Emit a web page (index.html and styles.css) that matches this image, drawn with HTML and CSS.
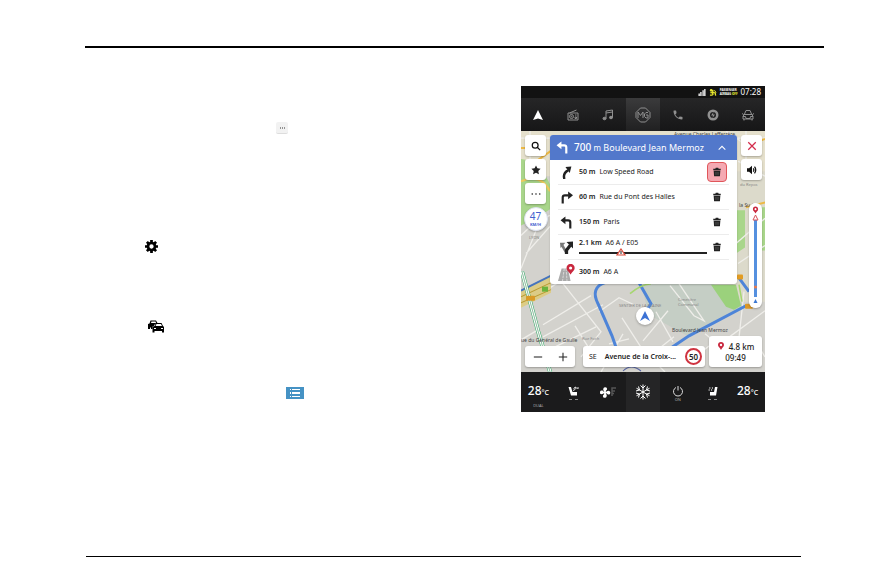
FILE: index.html
```html
<!DOCTYPE html>
<html lang="en">
<head>
<meta charset="utf-8">
<meta name="viewport" content="width=device-width, initial-scale=1">
<title>Navigation route list</title>
<link rel="stylesheet" href="styles.css">
</head>
<body>
<svg class="defs" aria-hidden="true">
  <symbol id="trash" viewBox="0 0 24 24"><path fill="currentColor" d="M9 2h6l1 2h5v4H3V4h5zM4 9h16l-1 13H5z"/><path d="M9 12v7M12 12v7M15 12v7" stroke="#fff" stroke-opacity=".35" stroke-width="1"/></symbol>
  <symbol id="pin" viewBox="0 0 24 24"><path fill="#c9283e" d="M12 0C6.500 0 3 4 3 9c0 6 6 8 9 15 3-7 9-9 9-15 0-5-3.500-9-9-9z"/><circle cx="12" cy="9" r="3.500" fill="#fff"/></symbol>
  <symbol id="left" viewBox="0 0 24 24"><path d="M8 8h7q4 0 4 4v11" fill="none" stroke="currentColor" stroke-width="4"/><path fill="currentColor" d="M10 1v14L1 8z"/></symbol>
  <symbol id="right" viewBox="0 0 24 24"><path d="M5 23V12q0-4 4-4h7" fill="none" stroke="currentColor" stroke-width="4"/><path fill="currentColor" d="M15 1v14l9-7z"/></symbol>
</svg>
<header class="page-head"></header>
<main class="page">
  <section class="notes">
    <span class="note-icon chip"><svg viewBox="0 0 12 12"><path d="M4 6h1M6 6h1M8 6h1" stroke="#333" stroke-width="1"/></svg></span>
    <svg class="note-icon gear" viewBox="0 0 24 24"><circle cx="12" cy="12" r="6.500" fill="none" stroke="#000" stroke-width="5"/><path d="M12 0v4M12 20v4M0 12h4M20 12h4M3.500 3.500l3 3M17.500 17.500l3 3M3.500 20.500l3-3M17.500 6.500l3-3" stroke="#000" stroke-width="5"/></svg>
    <svg class="note-icon cars" viewBox="0 0 32 26"><path d="M0 18V8l3-1 2-6h11l3 5-5 2-3 5H9v5H6v-3H4v3z"/><path d="M6 6l1-3h8l1 3z" fill="#fff"/><path d="M9 25V14l4-2 3-6h11l3 6 2 2v11h-4v-3H13v3z"/><path d="M15 12l2-4h9l2 4z" fill="#fff"/><path d="M12 16h4v2h-4zM26 16h4v2h-4z" fill="#fff"/></svg>
    <svg class="note-icon list" viewBox="0 0 18 12"><path fill="#4592c4" d="M0 0h18v12H0z"/><path d="M4 2.500h1M6 2.500h8M4 9.500h1M6 9.500h8" stroke="#fff" stroke-width="1"/><path d="M4 6h1M6 6h8" stroke="#fff" stroke-width="2"/></svg>
  </section>

  <section class="device" aria-label="Navigation screen">
    <div class="status">
      <svg class="ic8" viewBox="0 0 16 16"><path fill="#fff" d="M0 10h3v6H0zM4 7h3v9H4zM9 3h3v13H9zM13 0h3v16h-3z"/></svg>
      <svg class="ic8" viewBox="0 0 16 16"><path d="M2 2l5 2 1 4 5 1 1 6M2 8l5 1 1 5M1 14h6" stroke="#e6e62e" stroke-width="3" fill="none"/><circle cx="4" cy="3" r="3" fill="#e6e62e"/><path d="M9 3q5 0 6 6" stroke="#e6e62e" stroke-width="2" fill="none"/></svg>
      <span class="airbag">PASSENGER<br>AIRBAG <b>OFF</b></span>
      <time class="clock">07:28</time>
    </div>
    <nav class="tabs">
      <button aria-label="Navigation" class="tab on"><svg viewBox="0 0 24 24"><path fill="#fff" d="M12 2l10 20-10-3-10 3z"/></svg></button>
      <button aria-label="Radio" class="tab"><svg viewBox="0 0 24 24" fill="none" stroke="currentColor" stroke-width="2"><path d="M2 8h20v14H2zM5 8l14-6M16 12h3M16 16h3v3h-3z"/><circle cx="9" cy="15" r="4"/><circle cx="9" cy="15" r="1"/></svg></button>
      <button aria-label="Music" class="tab"><svg viewBox="0 0 24 24" fill="none" stroke="currentColor" stroke-width="2"><path d="M8 19V4l13-2v15M8 8l13-2"/><ellipse cx="5" cy="19" rx="3" ry="2.500" fill="currentColor"/><ellipse cx="18" cy="17" rx="3" ry="2.500" fill="currentColor"/></svg></button>
      <button aria-label="Home" class="tab home"><svg viewBox="0 0 32 32" fill="none" stroke="currentColor" stroke-width="2"><path d="M11 2h10l9 9v10l-9 9H11l-9-9V11z"/><path d="M6 22V10l5 7 5-7v12M26 11h-4l-3 3v5l3 3h4v-6h-4"/></svg></button>
      <button aria-label="Phone" class="tab"><svg viewBox="0 0 24 24"><path fill="currentColor" d="M6.600 10.800c1.400 2.800 3.800 5.100 6.600 6.600l2.200-2.200c.3-.3.700-.4 1-.2 1.100.4 2.300.6 3.600.6.600 0 1 .4 1 1V20c0 .6-.4 1-1 1C10.600 21 3 13.400 3 4c0-.6.400-1 1-1h3.500c.6 0 1 .4 1 1 0 1.300.2 2.500.6 3.600.1.300 0 .7-.2 1z"/></svg></button>
      <button aria-label="Energy" class="tab"><svg viewBox="0 0 24 24"><circle cx="12" cy="12" r="8.500" fill="none" stroke="currentColor" stroke-width="5"/><path fill="currentColor" d="M13 6l-5 7h4l-1 5 5-7h-4z"/></svg></button>
      <button aria-label="Vehicle" class="tab"><svg viewBox="0 0 24 24" fill="none" stroke="currentColor" stroke-width="2"><path d="M5 10l3-7h8l3 7M0 9l3 2h18l3-2M2 20v-6l3-3h14l3 3v6zM4 20v3M20 20v3M2 15h5l1 4h8l1-4h5"/></svg></button>
    </nav>

    <div class="map">
      <svg class="map-art" viewBox="0 0 244 240" preserveAspectRatio="none" aria-hidden="true">
        <path fill="#d3d2cd" d="M0 0h244v240H0z"/>
        <path fill="#e5e0cc" d="M0 0h244v45H0z"/>
        <path fill="#dcdacb" d="M212 40h32v130h-32z"/>
        <path fill="#a9d68b" d="M0 28q18 2 29 25v25L17 86 0 94zM212 79h12v37l-12 8zM238 76h6v43h-6z"/>
        <path fill="#c5cec5" d="M120 152h72l32 22-56 31-40-22z"/>
        <path fill="#9bd17c" d="M190 153h25l5 21-7 4-8-3z"/>
        <g fill="none" stroke="#efeeea" stroke-width="1.300">
          <path d="M0 104l15-14 14-6M5 122l24-27M0 137l15-38M0 175l40-26M22 193l48-29M22 205l60-32M30 217l45-22M54 194l15 24M42 152l38 48-20 25M80 240l22-38M88 212l20-5M78 180l20-14 15 7M101 186l20 31 23 23M135 180l17 30M122 209l25-30M126 226l27-21M158 152l25 37-10-5-24-30M223 160l-6 55M203 209l41-30M184 202l20 16M168 230l20-16M233 207l11 18M12 215l30 14M0 208l17-10"/>
          <path d="M0 7h244M9 0v30M225 0v44M217 30l27 15M215 112l29-25M217 132l27-18M205 0l20 14"/>
        </g>
        <path d="M0 50q20-8 29 10" fill="none" stroke="#f0cb5c" stroke-width="2"/>
        <path d="M-2 17h14M225 76l20-5M224 14l20-6M14 31l17-12" stroke="#edb944" stroke-width="2"/>
        <path d="M0 159l30-15v17L0 176z" fill="#dccc86"/>
        <path d="M0 165l30-14M0 171l30-13" stroke="#b99a31"/>
        <path d="M0 159l30-15" stroke="#4674bd" stroke-width="2"/>
        <path d="M1 140l16 59 13 44" fill="none" stroke="#35a967" stroke-width="4"/>
        <path d="M1 140l16 59 13 44" fill="none" stroke="#fff" stroke-width="3"/>
        <path d="M1 140l16 59 13 44" fill="none" stroke="#8ebb9e" stroke-width="1"/>
        <path d="M84 151q-15 5-7 21l14 32 6 17M118 151l12 21-8 12M144 220l24-16 57-30M217 145l11 15" fill="none" stroke="#4d84d8" stroke-width="3"/>
        <path d="M102 239q8-8 18 0" fill="none" stroke="#5865a5"/>
        <path d="M109 162q10-9 21-10M218 153l3 17" fill="none" stroke="#a6d66f" stroke-width="1.500"/>
        <rect x="5" y="164" width="9" height="5" rx="1" fill="#d99b27"/><rect x="21" y="155" width="6" height="5" fill="#6ab33c"/>
        <rect x="216" y="143" width="6" height="5" rx="1" fill="#e29c22"/><rect x="224" y="172" width="8" height="5" rx="1" fill="#db9727"/>
        <g class="map-label">
          <text x="153" y="5">Avenue Charles Lafferrère</text>
          <text x="151" y="200">Boulevard Jean Mermoz</text>
          <text x="0" y="210">ue du Général de Gaulle</text>
          <text x="61" y="208" class="faint">Rue Foch</text>
          <text x="218" y="76">la Sud</text>
          <text x="219" y="55" class="faint">du Repos</text>
          <text x="98" y="175" class="faint">SENTIER DE LA PLAINE</text>
          <text x="157" y="169" class="faint">Cimetière</text>
          <text x="157" y="174" class="faint">Communal</text>
          <text x="8" y="108" class="faint">LYON</text>
        </g>
      </svg>
      <svg class="vehicle" viewBox="0 0 18 18"><circle cx="9" cy="9" r="9" fill="#fff"/><path fill="#3c72d5" d="M9 4l5 10-5-3-5 3z"/></svg>

      <div class="overlay-top">
        <div class="rail">
          <button class="tile" aria-label="Search"><svg viewBox="0 0 24 24" fill="none" stroke="#111" stroke-width="3"><circle cx="10" cy="10" r="7"/><path d="M15 15l7 7"/></svg></button>
          <button class="tile" aria-label="Favourites"><svg viewBox="0 0 24 24"><path fill="#222" d="M12 1l3.400 7 7.600 1-5.500 5.300L19 22l-7-3.600L5 22l1.500-7.700L1 9l7.600-1z"/></svg></button>
          <button class="tile" aria-label="More"><svg viewBox="0 0 24 24" fill="#222"><circle cx="3" cy="12" r="2"/><circle cx="12" cy="12" r="2"/><circle cx="21" cy="12" r="2"/></svg></button>
          <div class="speed"><span>47</span><small>KM/H</small></div>
        </div>

        <section class="route">
          <header class="route-head">
            <svg class="turn" viewBox="0 0 24 24"><use href="#left"/></svg>
            <h1><span class="num">700</span> <small>m</small> Boulevard Jean Mermoz</h1>
            <button class="bare" aria-label="Collapse"><svg viewBox="0 0 24 24"><path d="M4 16l8-8 8 8" fill="none" stroke="#fff" stroke-width="2.500"/></svg></button>
          </header>
          <ol class="steps">
            <li><svg class="turn" viewBox="0 0 24 24"><path d="M8 24q-3-11 7-16" fill="none" stroke="currentColor" stroke-width="4.500"/><path fill="currentColor" d="M10 2l11-1-3 12z"/></svg><p><b>50 m</b> Low Speed Road</p><button class="del active" aria-label="Avoid Low Speed Road"><svg><use href="#trash"/></svg></button></li>
            <li><svg class="turn"><use href="#right"/></svg><p><b>60 m</b> Rue du Pont des Halles</p><button class="del" aria-label="Avoid Rue du Pont des Halles"><svg><use href="#trash"/></svg></button></li>
            <li><svg class="turn"><use href="#left"/></svg><p><b>150 m</b> Paris</p><button class="del" aria-label="Avoid Paris"><svg><use href="#trash"/></svg></button></li>
            <li><svg class="turn" viewBox="0 0 24 24"><path d="M11 20L4 8" fill="none" stroke="#777" stroke-width="5"/><path fill="#777" d="M0 3h10L1 13z"/><path d="M12 24v-7l7-9" fill="none" stroke="currentColor" stroke-width="6"/><path fill="currentColor" d="M12 2l12-1v13z"/></svg><div class="traffic"><p><b>2.1 km</b> A6 A / E05</p><svg class="traffic-line" viewBox="0 0 128 8" preserveAspectRatio="none"><path d="M0 5h128" stroke="#222" stroke-width="2"/><path d="M42 1l4 6h-8z" fill="#fff" stroke="#d84a3a" stroke-width="1.200"/><path d="M42 3v3" stroke="#222"/></svg></div><button class="del" aria-label="Avoid A6 A / E05"><svg><use href="#trash"/></svg></button></li>
            <li><svg class="arrive" viewBox="0 0 20 20"><path fill="#aaa" d="M4 6h7l3 14H0z"/><path d="M7 6L5 20M9 6l1 14" stroke="#fff" stroke-width=".6" stroke-dasharray="3 1"/><svg x="8" y="0" width="12" height="14" viewBox="0 0 24 24"><use href="#pin"/></svg></svg><p><b>300 m</b> A6 A</p></li>
          </ol>
        </section>

        <div class="rail rail-end">
          <button class="tile" aria-label="Close"><svg viewBox="0 0 24 24"><path d="M3 3l18 18M21 3L3 21" stroke="#d42b4b" stroke-width="3"/></svg></button>
          <button class="tile" aria-label="Sound"><svg viewBox="0 0 24 24"><path fill="#111" d="M0 8h5l7-6v20l-7-6H0z"/><path d="M15 8q3 4 0 8M18 4q6 8 0 16" fill="none" stroke="#111" stroke-width="3"/></svg></button>
          <div class="progress"><svg viewBox="0 0 13 105" preserveAspectRatio="none"><path d="M6.500 14v80" stroke="#5590df" stroke-width="3"/><svg x="3" y="3" width="7" height="8"><use href="#pin"/></svg><path d="M6.500 12l2.500 5H4z" fill="#fff" stroke="#d75259"/><circle cx="6.500" cy="84" r="1.500" fill="#ed7a48"/><path d="M6.500 96l2 4h-4z" fill="#3b77d2"/></svg></div>
        </div>
      </div>

      <div class="overlay-bottom">
        <div class="card zoom"><button class="bare" aria-label="Zoom out"><svg viewBox="0 0 24 24"><path d="M2 12h20" stroke="#222" stroke-width="2.500"/></svg></button><button class="bare" aria-label="Zoom in"><svg viewBox="0 0 24 24"><path d="M2 12h20M12 2v20" stroke="#222" stroke-width="2.500"/></svg></button></div>
        <div class="card street"><span>SE</span><strong>Avenue de la Croix-...</strong><span class="limit">50</span></div>
        <div class="card eta"><span><svg><use href="#pin"/></svg>4.8 km</span><span>09:49</span></div>
      </div>
    </div>

    <footer class="climate">
      <div class="cell"><span class="temp">28<small>°C</small></span><span class="sub">DUAL</span></div>
      <div class="cell"><svg viewBox="0 0 24 24"><path d="M3 2h5l3 10h9v7H8z" fill="#fff"/><path d="M12 9q5 0 5-7M17 2l-4 3M17 2l4 4M20 4h4" fill="none" stroke="#ddd" stroke-width="2"/></svg><span class="dash"></span></div>
      <div class="cell fan"><svg class="wide" viewBox="0 0 34 24"><g fill="#fff"><circle cx="10" cy="13" r="3"/><path d="M10 12q-6-4-2-9 7-2 6 4zM11 13q5-6 9-2 2 7-4 6zM10 14q6 4 2 9-7 2-6-4zM9 13q-5 6-9 2-1-7 5-6z"/></g><path d="M24 20V4h8M25 10h5M25 15h3" stroke="#555" stroke-width="3" fill="none"/></svg></div>
      <div class="cell mid"><svg class="snow" viewBox="0 0 32 32" fill="none" stroke="#fff" stroke-width="2"><path d="M16 1v30M3 8.500l26 15M3 23.500l26-15M11 3l5 5 5-5M11 29l5-5 5 5M2 14l7-2-2-7M30 18l-7 2 2 7M2 18l7 2-2 7M30 14l-7-2 2-7"/></svg></div>
      <div class="cell"><svg viewBox="0 0 24 24"><path d="M8 3a9 9 0 1 0 8 0M12 0v9" fill="none" stroke="#ddd" stroke-width="2"/></svg><span class="sub">ON</span></div>
      <div class="cell"><svg viewBox="0 0 24 24"><path d="M21 2h-5l-2 10H6v7h12z" fill="#fff"/><path d="M5 2q3 2 0 4t0 4M10 2q3 2 0 4t0 4" fill="none" stroke="#aaa" stroke-width="2"/></svg><span class="dash"></span></div>
      <div class="cell"><span class="temp">28<small>°C</small></span></div>
    </footer>
  </section>
</main>
<footer class="page-foot"></footer>
</body>
</html>
```
FILE: styles.css
```css
* { box-sizing: border-box; }
body {
  margin: 0;
  min-height: 100vh;
  padding: 46px 72px 10px 85px;
  display: flex;
  flex-direction: column;
  background: #fff;
  font: 7px/10px "Noto Sans", "Liberation Sans", sans-serif;
  color: #222;
}
h1, p, ol { margin: 0; padding: 0; font-weight: 400; }
button { margin: 0; padding: 0; border: 0; background: none; color: inherit; font: inherit; display: flex; align-items: center; justify-content: center; }
svg { display: block; flex: none; }
.defs { position: absolute; width: 0; height: 0; }
.page-head { border-top: 2px solid #000; }
.page-foot { margin: auto 23px 0 1px; border-top: 1px solid #000; }
.page {
  display: grid;
  grid-template-columns: 436fr 244fr 59fr;
  align-items: start;
  padding-top: 38px;
}

.notes { display: flex; flex-direction: column; align-items: flex-start; padding: 36px 0 0 60px; }
.chip { width: 12px; height: 12px; margin-left: 131px; background: #f2f2f2; border-bottom: 1px solid #ddd; border-radius: 2px; }
.gear { width: 13px; height: 13px; margin-top: 106px; }
.cars { width: 16px; height: 13px; margin: 67px 0 0 3px; }
.list { width: 18px; height: 12px; margin: 54px 0 0 141px; }

.device { grid-column: 2; min-width: 0; background: #1b1b1c; }
.status { display: flex; align-items: center; justify-content: flex-end; gap: 3px; height: 12px; padding-right: 4px; background: #121212; color: #fff; }
.ic8 { width: 8px; height: 7px; }
.airbag { font-size: 3px; line-height: 4px; font-weight: 700; }
.airbag b { color: #e6e62e; }
.clock { font-size: 8px; }

.tabs { display: grid; grid-template-columns: repeat(7, 1fr); height: 33px; background: linear-gradient(#262627, #161617); color: #909090; }
.tab svg { width: 12px; height: 12px; }
.tab.home { background: linear-gradient(#3b3b3c, #202021); }
.tab.home svg { width: 16px; height: 16px; }

.map { position: relative; height: 241px; padding: 4px 3px 5px 4px; display: flex; flex-direction: column; justify-content: space-between; overflow: hidden; }
.map-art { position: absolute; inset: 0; width: 100%; height: 100%; }
.map-label { font-size: 5px; fill: #444; }
.map-label .faint { font-size: 4px; fill: #858585; }
.vehicle { position: absolute; left: 47%; top: 73%; width: 18px; height: 18px; filter: drop-shadow(0 1px 1px #0004); }

.overlay-top, .overlay-bottom { position: relative; display: flex; gap: 4px; }
.overlay-bottom { align-items: flex-end; }
.rail { width: 21px; flex: none; display: flex; flex-direction: column; align-items: center; gap: 3px; }
.rail-end { align-items: flex-end; }
.tile { width: 21px; height: 21px; border-radius: 3px; background: #fff; box-shadow: 0 1px 2px #0004; }
.tile svg { width: 10px; height: 10px; }
.speed { width: 24px; height: 24px; border-radius: 50%; background: #fff; border: 1px solid #dde2ef; box-shadow: 0 1px 2px #0004; color: #4461cf; text-align: center; display: flex; flex-direction: column; align-items: center; justify-content: center; font: 10px/12px "Noto Sans", sans-serif; }
.speed small { font-size: 4px; line-height: 6px; font-weight: 700; }
.progress { width: 13px; height: 105px; margin-top: 20px; background: #fff; border-radius: 6px; box-shadow: 0 1px 2px #0004; }
.progress > svg { width: 100%; height: 100%; }

.route { flex: 1; min-width: 0; align-self: flex-start; background: #fff; border-radius: 3px; overflow: hidden; box-shadow: 0 1px 2px #0003; }
.route-head { display: flex; align-items: center; height: 25px; padding: 0 10px 0 6px; background: #5278cb; color: #fff; }
.route-head h1 { flex: 1; padding-left: 5px; font-size: 9px; white-space: nowrap; }
.route-head .num { font-size: 10px; font-weight: 500; }
.route-head small { font-size: 8px; }
.turn { width: 13px; height: 13px; }
.bare svg { width: 10px; height: 10px; }
.steps { list-style: none; }
.steps li { display: flex; align-items: center; gap: 6px; height: 25px; margin: 0 8px; padding-left: 2px; border-bottom: 1px solid #ececec; }
.steps li:last-child { height: 24px; border: 0; padding-left: 0; gap: 3px; }
.steps p { flex: 1; white-space: nowrap; }
.steps b { font-weight: 600; margin-right: 2px; }
.arrive { width: 18px; height: 18px; }
.traffic { flex: 1; min-width: 0; }
.traffic-line { width: 128px; max-width: 100%; height: 8px; }
.del { width: 20px; height: 20px; flex: none; border: 1px solid transparent; border-radius: 4px; color: #222; margin-right: 2px; }
.traffic + .del { margin-left: -6px; }
.del svg { width: 10px; height: 10px; }
.active { background: #f5a9b2; border-color: #e0565a; }

.card { height: 21px; background: #fff; border-radius: 3px; box-shadow: 0 1px 2px #0004; display: flex; align-items: center; }
.zoom { width: 50px; justify-content: space-around; margin-right: 4px; }
.zoom svg { width: 10px; height: 10px; }
.street { flex: 1; min-width: 0; gap: 8px; padding: 0 3px 0 6px; white-space: nowrap; }
.street strong { flex: 1; font-weight: 600; }
.limit { flex: none; width: 17px; height: 17px; border: 2px solid #cf3340; border-radius: 50%; font: 600 8px/13px "Noto Sans", sans-serif; display: flex; align-items: center; justify-content: center; }
.eta { width: 53px; height: 31px; flex-direction: column; justify-content: center; font-size: 8px; line-height: 11px; font-weight: 500; }
.eta span { display: flex; align-items: center; gap: 4px; }
.eta svg { width: 8px; height: 8px; }

.climate { display: grid; grid-template-columns: repeat(7, 1fr); height: 40px; background: #1b1b1c; color: #fff; }
.cell { position: relative; display: flex; align-items: center; justify-content: center; }
.cell svg { width: 12px; height: 12px; }
.cell .wide { width: 17px; }
.cell .snow { width: 16px; height: 16px; }
.mid { background: #252526; }
.temp { font: 500 12px/16px "Noto Sans", sans-serif; white-space: nowrap; }
.temp small { font-size: 7px; }
.sub { position: absolute; bottom: 4px; font-size: 4px; line-height: 5px; color: #aaa; }
.cell svg + .sub { bottom: 10px; }
.dash { position: absolute; bottom: 12px; width: 9px; border-top: 1px dashed #888; }
```
